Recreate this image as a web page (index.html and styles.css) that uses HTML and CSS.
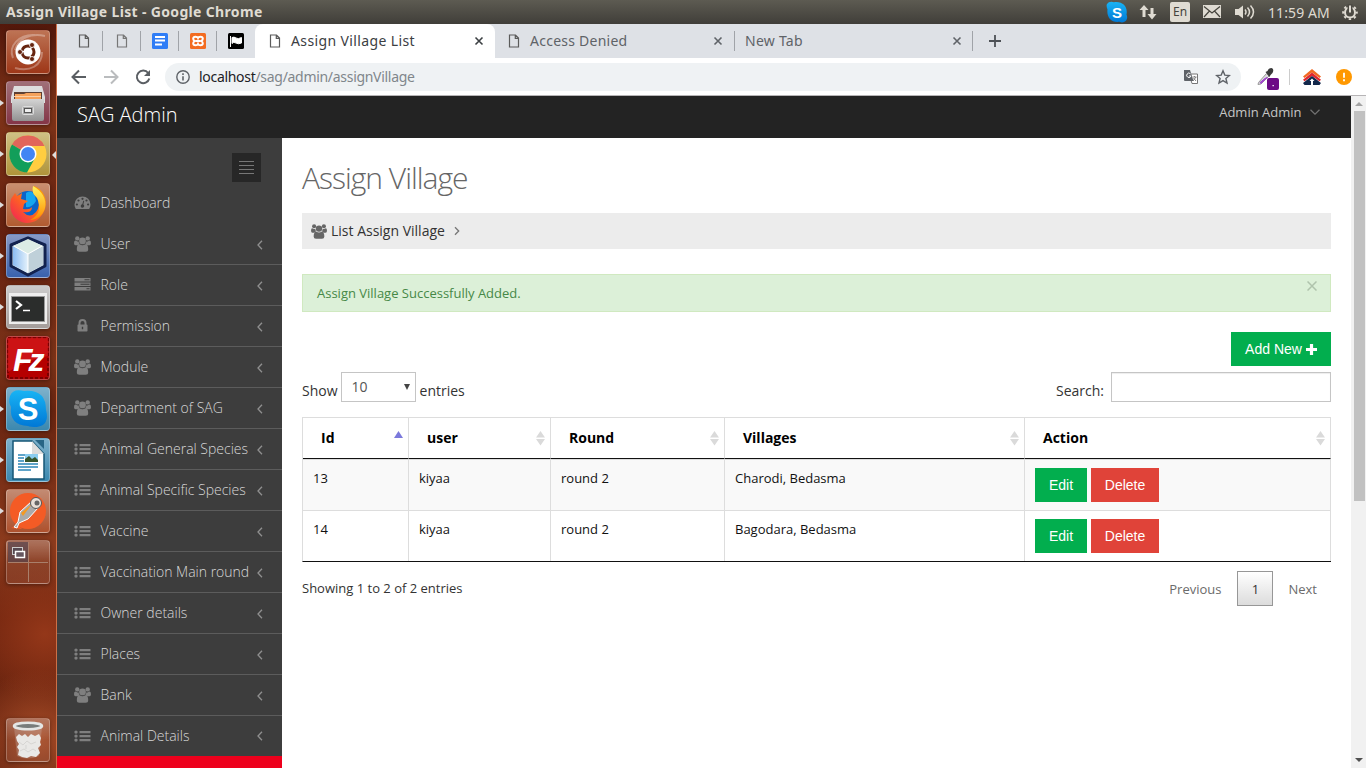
FILE: index.html
```html
<!DOCTYPE html>
<html lang="en">
<head>
<meta charset="utf-8">
<title>Assign Village List</title>
<link rel="stylesheet" href="styles.css">
</head>
<body>
<svg class="defs" aria-hidden="true">
  <defs>
    <symbol id="users" viewBox="0 0 17 16"><circle cx="3.300" cy="2.400" r="2.200"/><circle cx="13.700" cy="2.400" r="2.200"/><circle cx="8.500" cy="4.900" r="3.400"/><path d="M0 7.200Q0 4.600 1.300 4.600q2 1.200 3.300.600.100 1.900 1.100 2.700Q4.300 8 3.500 9.200H1.500Q0 9.200 0 7.200zM17 7.200q0-2.600-1.300-2.600-2 1.200-3.300.600-.1 1.900-1.100 2.700 1.400.100 2.200 1.300h2Q17 9.200 17 7.200zM2.800 13.300Q2.800 8.300 5.700 8.300 8.500 10 11.300 8.300q2.900 0 2.900 5 0 2.500-2.500 2.500H5.300q-2.500 0-2.500-2.500z"/></symbol>
    <symbol id="dash" viewBox="0 0 17 16"><path fill-rule="evenodd" d="M8.500 1.500A8 8 0 0 0 .5 9.500c0 1.600.4 3 1.200 4.200q.2.300.6.300h12.400q.4 0 .6-.3c.8-1.200 1.200-2.600 1.200-4.200A8 8 0 0 0 8.500 1.500zM8.500 2.700a1.100 1.100 0 1 1 0 2.200 1.100 1.100 0 1 1 0-2.200zM4.500 4.400a1.100 1.100 0 1 1 0 2.200 1.100 1.100 0 1 1 0-2.200zM2.900 8.400a1.100 1.100 0 1 1 0 2.200 1.100 1.100 0 1 1 0-2.200zM12.500 4.400a1.100 1.100 0 1 1 0 2.200 1.100 1.100 0 1 1 0-2.200zM14.100 8.400a1.100 1.100 0 1 1 0 2.200 1.100 1.100 0 1 1 0-2.200zM9.300 5.700l.9.200-.9 3.600a1.750 1.750 0 1 1-1-.2z"/></symbol>
    <symbol id="list" viewBox="0 0 17 16"><path d="M5.500 2H16.500v2.300H5.500zM5.500 6H16.500v2.300H5.500zM5.500 10H16.500v2.300H5.500zM5.500 13H5.500z"/><circle cx="2" cy="3.100" r="1.700"/><circle cx="2" cy="7.100" r="1.700"/><circle cx="2" cy="11.100" r="1.700"/></symbol>
    <symbol id="tasks" viewBox="0 0 17 16"><path fill-rule="evenodd" d="M.5 1h16v3.500H.5zM10.500 2.300v1h5v-1zM.5 5.500h16V9H.5zM6.500 6.800v1h9v-1zM.5 10h16v3.500H.5zM12.500 11.300v1h3v-1z"/></symbol>
    <symbol id="lock" viewBox="-2.500 -.5 17 16"><path fill-rule="evenodd" d="M2 6V4.400a4 4 0 0 1 8 0V6h.2q.8 0 .8.800v5.400q0 .8-.8.800H1.800q-.8 0-.8-.8V6.800q0-.8.8-.8zm2 0h4V4.400a2 2 0 0 0-4 0zM5.300 8.200h1.400v2.600H5.300z"/></symbol>
    <symbol id="page" viewBox="0 0 12 14"><path d="M1.500 1h6L10.500 4v9h-9zM7.300 1v3.300h3.200" fill="none" stroke="currentColor" stroke-width="1.200"/></symbol>
    <symbol id="x" viewBox="0 0 10 10"><path d="M1.500 1.500l7 7M8.500 1.500l-7 7" fill="none" stroke="currentColor" stroke-width="1.600"/></symbol>
    <symbol id="left" viewBox="0 0 6 10"><path d="M5 .8L1 5l4 4.200" fill="none" stroke="currentColor" stroke-width="1.300"/></symbol>
    <symbol id="sort" viewBox="0 0 9 16"><path d="M0 7.500L4.500 1 9 7.500zM0 9h9l-4.500 6.500z"/></symbol>
    <linearGradient id="gold" x2="0" y2="1"><stop stop-color="#fff45c"/><stop offset="1" stop-color="#ff8a00"/></linearGradient>
    <linearGradient id="flame" x1="1" x2="0" y2="1"><stop stop-color="#ffae00"/><stop offset=".5" stop-color="#ff6b1c"/><stop offset="1" stop-color="#f01b5c"/></linearGradient>
    <linearGradient id="metal" x2="0" y2="1"><stop stop-color="#d4d4d4"/><stop offset="1" stop-color="#929292"/></linearGradient>
    <linearGradient id="sky" x2="0" y2="1"><stop stop-color="#19b4f4"/><stop offset="1" stop-color="#0078d6"/></linearGradient>
    <linearGradient id="ice" x2="1"><stop stop-color="#8cbcf2"/><stop offset="1" stop-color="#e5f2fb"/></linearGradient>
  </defs>
</svg>

<header class="menubar">
  <span class="wintitle">Assign Village List - Google Chrome</span>
  <div class="tray">
    <svg class="t-skype" viewBox="0 0 22 22"><path d="M1 3Q3 0 8 1.200C17 0 22 6 20.500 13.500 23 19 18 23 13.500 20.800 5 22 .5 16 1.500 8.500Q0 5 1 3z" fill="url(#sky)"/><text x="11" y="16.500" text-anchor="middle" class="skype-s">S</text></svg>
    <svg class="t-net" viewBox="0 0 18 16"><path d="M3.500 13V6H.5L5 1l4.500 5h-3v7zM11.500 4h3v6h3L13 15.500 8.500 10h3z" fill="#dfdbd2"/></svg>
    <span class="lang">En</span>
    <svg class="t-mail" viewBox="0 0 18 14"><path d="M0 0h18v13H0z" fill="#dfdbd2"/><path d="M1 1.500l8 6.500 8-6.500M1 12l5.500-6M17 12l-5.500-6" fill="none" stroke="#45433c" stroke-width="1.200"/></svg>
    <svg class="t-vol" viewBox="0 0 20 16"><path d="M0 5h3.500L8 1.500v13L3.500 11H0z" fill="#dfdbd2"/><path d="M10 5.500q2 2.500 0 5M12.500 3.500q4 4.500 0 9M15.500 1.500q6 6.500 0 13" fill="none" stroke="#dfdbd2" stroke-width="1.500"/></svg>
    <span class="clock">11:59 AM</span>
    <svg class="t-gear" viewBox="0 0 16 16"><circle cx="8" cy="8.500" r="5" fill="none" stroke="#dfdbd2" stroke-width="2"/><circle cx="8" cy="8.500" r="6.800" fill="none" stroke="#dfdbd2" stroke-width="2" stroke-dasharray="2.400 2.940" stroke-dashoffset="1.200"/><path d="M8 0v9" stroke="#4d4b44" stroke-width="5"/><path d="M8 1.500v7" stroke="#dfdbd2" stroke-width="2"/></svg>
  </div>
</header>

<div class="desktop">
  <nav class="launcher">
    <div class="tile dash-tile"><svg viewBox="0 0 44 44"><path d="M9 20C12 8 25 3 39 6M7 28C2 16 13 4 29 5M36 22c0 14-12 20-27 16" fill="none" stroke="#fff" stroke-opacity=".3" stroke-width="2"/><circle cx="22" cy="22" r="12.500" fill="#fff"/><circle cx="22" cy="22" r="6" fill="none" stroke="#66240f" stroke-width="3" stroke-dasharray="11 1.560" stroke-dashoffset="5.500"/><g fill="#66240f" stroke="#fff" stroke-width=".8"><circle cx="14" cy="22" r="2.500"/><circle cx="26" cy="15" r="2.500"/><circle cx="26" cy="29" r="2.500"/></g></svg></div>
    <div class="tile files run"><svg viewBox="0 0 44 44"><path d="M8 5h28l3 11v6H5v-6z" fill="#dedede"/><path d="M8 11h28v8H8z" fill="#5d4033"/><path d="M9 13h9l2-1h15v7H9z" fill="#f5a25b"/><path d="M8 15.500h27" stroke="#fbd0a5"/><path d="M6 18h32v20q0 2-2 2H8q-2 0-2-2z" fill="url(#metal)"/><rect x="16.500" y="25.500" width="11" height="8" rx="1" fill="#aaa" stroke="#ddd"/><rect x="18.500" y="27.500" width="7" height="4" fill="#eee" stroke="#555"/></svg></div>
    <div class="tile chrome-tile run active"><svg viewBox="0 0 44 44"><circle cx="22" cy="22" r="18.500" fill="#ffcd40"/><path d="M22 22L6 12.500A18.500 18.500 0 0 1 38.500 14H22z" fill="#e1655a"/><path d="M6 12.500A18.500 18.500 0 0 0 21 40.500l8-14.500-7-4z" fill="#129e5a"/><circle cx="22" cy="22" r="8.500" fill="#fff"/><circle cx="22" cy="22" r="7" fill="#4285f4"/></svg></div>
    <div class="tile fire run"><svg viewBox="0 0 44 44"><circle cx="22" cy="22" r="14" fill="#0a63c8"/><path d="M20 10q8-5 10 8-4 7-10 6z" fill="#14a6ef"/><path d="M5 16l4-6 2 3 5-3-1 6 7 2-4 3-1 5q7 1 9-2c0 5-5 6-9 5q7 7 13 0 5-6 1-16-5-4-3-10c9 3 14 13 11 23C35 37 27 40 21 40 9 39 2 29 5 16z" fill="url(#flame)"/><path d="M27 3c9 5 14 13 12 22-2 8-9 12-15 12 10-5 11-13 7-22q-6-5-4-12z" fill="url(#gold)"/></svg></div>
    <div class="tile beans run"><svg viewBox="0 0 44 44"><path d="M22 4l17 7v21L22 41 5 32V11z" fill="#dcebf1" stroke="#12224f" stroke-width="3" stroke-linejoin="round"/><path d="M7 12l15 8v19L7 31z" fill="url(#ice)"/><path d="M37 12l-15 8v19l15-8z" fill="#bfd0d9"/><path d="M22 5l15 7-15 8-15-8z" fill="#dcece6"/><path d="M8 12l14 8 14-8M22 20v18" fill="none" stroke="#fff"/></svg></div>
    <div class="tile term run"><svg viewBox="0 0 44 44"><path d="M3 8h38v31H3z" fill="#eee"/><path d="M5 11h34v26H5z" fill="#999"/><path d="M6 12h32v24H6z" fill="#2b2d2c"/><path d="M10 16l5 4-5 4" fill="none" stroke="#fff" stroke-width="2.200"/><path d="M17 25.500h7" stroke="#fff" stroke-width="1.500"/></svg></div>
    <div class="tile zilla"><svg viewBox="0 0 44 44"><rect x="2" y="2" width="40" height="40" fill="#b50000" stroke="#7c0000" stroke-width="2" stroke-dasharray="3 2"/><path d="M2 2h40v18Q20 24 2 36z" fill="#d51a1c" opacity=".7"/><text x="7" y="35" class="fz">Fz</text></svg></div>
    <div class="tile skype run"><svg viewBox="0 0 44 44"><path d="M4 9q3-8 14-5Q40 2 40 23q4 15-9 17-7 0-9-1Q3 38 5 20 2 15 4 9z" fill="url(#sky)"/><text x="22" y="33" text-anchor="middle" class="skype-l">S</text></svg></div>
    <div class="tile writer run"><svg viewBox="0 0 44 44"><path d="M29 2h9v9z" fill="#286585"/><path d="M7 3h19l12 13v25H7z" fill="#fff" stroke="#155675" stroke-width="1.500"/><path d="M26 3v13h12z" fill="#ddd"/><path d="M12 17h14M12 20h6M12 23h6M12 26h20M12 29h20M12 32h13" stroke="#2b87b8" stroke-width="1.400"/><path d="M19 16h13v8H19z" fill="#8bcdf0"/><path d="M19 24v-3l4-3 3 3 3-2 3 3v2z" fill="#35552c"/></svg></div>
    <div class="tile post run"><svg viewBox="0 0 44 44"><circle cx="22" cy="22" r="18" fill="#f45b25"/><path d="M5 39l7-3 4 4z" fill="#f45b25"/><path d="M8 38l4-5 2-10L26 12l5 2 1 5-10 11-9 4-2 5z" fill="#aaa" stroke="#fff"/><path d="M15 24l11-9-9 12z" fill="#f59a22"/><circle cx="30" cy="14" r="5.500" fill="#e8dfd8" stroke="#555"/><circle cx="31" cy="14" r="2.500" fill="#666"/></svg></div>
    <div class="tile spaces"><svg viewBox="0 0 44 44"><path d="M2 2h20v20H2z" fill="#56434d" opacity=".7"/><path d="M22.500 2v40M2 22.500h40" stroke="#a97f6b"/><rect x="6.500" y="7.500" width="10" height="7" fill="#554850" stroke="#ccc"/><rect x="9.500" y="11.500" width="9" height="6" fill="#665760" stroke="#fff" stroke-width="1.500"/></svg></div>
    <div class="tile trash"><svg viewBox="0 0 44 44"><path d="M8 9l3 29q10 5 22 0l3-29z" fill="#ddd" opacity=".22"/><path d="M10 19l3-3 3 2 3-2 3 3 3-3 4 2 4-2 2 4-1 4 1 3-3 3 2 5-4 4-5-1-4 2-5-1-4-2 1-5-2-3 2-3-2-3z" fill="#e9e8e6"/><path d="M13 24l4 3 4-4 4 3 5-2M14 33l4-2 4 3 5-3 3 2M20 27v4" fill="none" stroke="#cfcdca" stroke-width=".7"/><ellipse cx="22" cy="8" rx="14" ry="3.200" fill="#777c7b" stroke="#e4e6e5" stroke-width="2.500"/></svg></div>
  </nav>

  <div class="browser">
    <div class="tabs">
      <div class="pin"><svg class="doc"><use href="#page"/></svg></div>
      <div class="pin"><svg class="doc dim"><use href="#page"/></svg></div>
      <div class="pin"><svg class="fav" viewBox="0 0 16 16"><rect width="16" height="16" rx="1.500" fill="#2f7df6"/><path d="M3 4h10M3 7.500h10M3 11.500h7" stroke="#fff" stroke-width="1.800"/></svg></div>
      <div class="pin"><svg class="fav" viewBox="0 0 16 16"><rect width="16" height="16" rx="1.500" fill="#f36c21"/><path d="M8 5Q7.500 3.700 5.500 3.700 3.200 3.700 3.200 5.700q0 1.300 1.500 2.300-1.500 1-1.500 2.300 0 2 2.300 2 2 0 2.500-1.300.5 1.300 2.500 1.300 2.300 0 2.300-2 0-1.300-1.500-2.300 1.500-1 1.500-2.300 0-2-2.300-2Q8.500 3.700 8 5zM5.500 8h5" fill="none" stroke="#fff" stroke-width="2"/></svg></div>
      <div class="pin last"><svg class="fav" viewBox="0 0 16 16"><rect width="16" height="16" rx="1.500"/><path d="M2.500 3v11" stroke="#fff"/><path d="M4 4.500q2-1 4 .5t5.500-.5v5.500q-3 1.500-5.500 0t-4 .5z" fill="#fff" stroke="#fff"/></svg></div>
      <div class="tab on"><svg class="doc"><use href="#page"/></svg><span class="tl t1">Assign Village List</span><svg class="close"><use href="#x"/></svg></div>
      <div class="tab"><svg class="doc"><use href="#page"/></svg><span class="tl t2">Access Denied</span><svg class="close"><use href="#x"/></svg></div>
      <div class="tab bare"><span class="tl t3">New Tab</span><svg class="close"><use href="#x"/></svg></div>
      <svg class="plus" viewBox="0 0 12 12"><path d="M6 0v12M0 6h12" stroke="#4d5156" stroke-width="1.800"/></svg>
    </div>
    <div class="toolbar">
      <svg class="nav" viewBox="0 0 16 16"><path d="M15 8H2M8 1.500L1.500 8 8 14.500" fill="none" stroke="#5a5e63" stroke-width="2"/></svg>
      <svg class="nav" viewBox="0 0 16 16"><path d="M1 8h13M8 1.500L14.500 8 8 14.500" fill="none" stroke="#babcbe" stroke-width="2"/></svg>
      <svg class="nav" viewBox="0 0 16 16"><path d="M13.200 4A6.300 6.300 0 1 0 14.300 9.500" fill="none" stroke="#5a5e63" stroke-width="2"/><path d="M15 1v6H9z" fill="#5a5e63"/></svg>
      <div class="omni">
        <svg class="info" viewBox="0 0 14 14"><circle cx="7" cy="7" r="6.200" fill="none" stroke="#5f6368" stroke-width="1.400"/><path d="M7 6.200v4.300M7 3.300v1.600" stroke="#5f6368" stroke-width="1.600"/></svg>
        <span class="url"><b>localhost</b>/sag/admin/assignVillage</span>
        <svg class="trans" viewBox="0 0 14 14"><path d="M5 4h8.500v9.500H8z" fill="#fff" stroke="#777"/><path d="M0 0h6l3.500 11H1q-1 0-1-1z" fill="#5f6368"/><path d="M6.500 3.800A2.200 2.200 0 1 0 7 6H5" fill="none" stroke="#fff"/><path d="M8.500 7h4M10.500 6v1M9 11l3-4M9.500 8l2.500 3" fill="none" stroke="#777" stroke-width=".9"/></svg>
        <svg class="star" viewBox="0 0 16 16"><path d="M8 1.800l1.800 4.300 4.600.4-3.500 3 1.100 4.500L8 11.600 4 14l1.100-4.500-3.500-3 4.600-.4z" fill="none" stroke="#5f6368" stroke-width="1.400"/></svg>
      </div>
      <svg class="picker" viewBox="0 0 22 22"><path d="M1.500 14.500l8-9 2.500 2.500-8 8-3 .5z" fill="#ddd" stroke="#999"/><path d="M3 14.500l5-4 2-1-6 6z" fill="#a13fd0" stroke="#a13fd0"/><path d="M8.500 4l4 5 1-2 2-2q2-4-1-5-3 0-4 3z" fill="#3b3b3b"/><rect x="10" y="10" width="12" height="12" rx="2" fill="#6c0a86"/><path d="M15.500 17h1.300v1.300h-1.300z" fill="#fff"/></svg>
      <i class="vsep"></i>
      <svg class="house" viewBox="0 0 18 16"><path d="M0 7.500L9 0l9 7.500-1.500 1.500L9 3.500 1.500 9z" fill="#f26a22"/><path d="M0 10.800L9 3.500l9 7.300-1.500 1.500L9 7 1.500 12.300z" fill="#e0262f"/><path d="M0 14l9-7 9 7L16.500 16H10v-3H8v3H1.500z" fill="#13284b"/><path d="M9 9.500l2.500 2.500H10v4H8v-4H6.500z" fill="#fff"/></svg>
      <svg class="warn" viewBox="0 0 16 16"><circle cx="8" cy="8" r="8" fill="#ff9800"/><path d="M8 3.800v5M8 10.300v1.900" stroke="#fff" stroke-width="1.800"/></svg>
    </div>

    <div class="viewport">
      <div class="site">
        <div class="sitebar"><span class="brand">SAG Admin</span><span class="who">Admin Admin</span><svg class="down" viewBox="0 0 10 6"><path d="M.5.8L5 5.200 9.500.8" fill="none" stroke="#737373" stroke-width="1.200"/></svg></div>
        <div class="cols">
          <aside class="side">
            <div class="toggle"><i></i><i></i><i></i><i></i></div>
            <a class="item flat"><svg class="ic"><use href="#dash"/></svg><span>Dashboard</span></a>
            <a class="item"><svg class="ic"><use href="#users"/></svg><span>User</span><svg class="ar"><use href="#left"/></svg></a>
            <a class="item"><svg class="ic"><use href="#tasks"/></svg><span>Role</span><svg class="ar"><use href="#left"/></svg></a>
            <a class="item"><svg class="ic"><use href="#lock"/></svg><span>Permission</span><svg class="ar"><use href="#left"/></svg></a>
            <a class="item"><svg class="ic"><use href="#users"/></svg><span>Module</span><svg class="ar"><use href="#left"/></svg></a>
            <a class="item"><svg class="ic"><use href="#users"/></svg><span>Department of SAG</span><svg class="ar"><use href="#left"/></svg></a>
            <a class="item"><svg class="ic li"><use href="#list"/></svg><span>Animal General Species</span><svg class="ar"><use href="#left"/></svg></a>
            <a class="item"><svg class="ic li"><use href="#list"/></svg><span>Animal Specific Species</span><svg class="ar"><use href="#left"/></svg></a>
            <a class="item"><svg class="ic li"><use href="#list"/></svg><span>Vaccine</span><svg class="ar"><use href="#left"/></svg></a>
            <a class="item"><svg class="ic li"><use href="#list"/></svg><span>Vaccination Main round</span><svg class="ar"><use href="#left"/></svg></a>
            <a class="item"><svg class="ic li"><use href="#list"/></svg><span>Owner details</span><svg class="ar"><use href="#left"/></svg></a>
            <a class="item"><svg class="ic li"><use href="#list"/></svg><span>Places</span><svg class="ar"><use href="#left"/></svg></a>
            <a class="item"><svg class="ic"><use href="#users"/></svg><span>Bank</span><svg class="ar"><use href="#left"/></svg></a>
            <a class="item end"><svg class="ic li"><use href="#list"/></svg><span>Animal Details</span><svg class="ar"><use href="#left"/></svg></a>
            <div class="red"></div>
          </aside>
          <main class="main">
            <h1>Assign Village</h1>
            <div class="crumb"><svg class="cic"><use href="#users"/></svg><span>List Assign Village</span><svg class="car" viewBox="0 0 6 10"><path d="M1 1.200L4.700 5 1 8.800" fill="none" stroke="#777" stroke-width="1.300"/></svg></div>
            <div class="alert"><span>Assign Village Successfully Added.</span><svg class="dismiss" viewBox="0 0 10 10"><path d="M.5.5l9 9M9.500.5l-9 9" stroke="#afc3ac" stroke-width="1.500"/></svg></div>
            <div class="actions"><button class="btn green add">Add New <svg viewBox="0 0 11 11"><path d="M5.500 0v11M0 5.500h11" stroke="#fff" stroke-width="3.200"/></svg></button></div>
            <div class="controls">
              <span class="lab">Show</span><div class="select"><span>10</span><svg viewBox="0 0 6 6"><path d="M0 0h6L3 6z" fill="#444"/></svg></div><span class="lab ent">entries</span>
              <span class="lab srch">Search:</span><input class="search" aria-label="Search">
            </div>
            <table class="grid">
              <colgroup><col class="c1"><col class="c2"><col class="c3"><col class="c4"><col class="c5"></colgroup>
              <thead><tr>
                <th><div><span>Id</span><svg viewBox="0 0 9 16"><path d="M0 8L4.500 1 9 8z" fill="#7b79dc"/></svg></div></th>
                <th><div><span>user</span><svg><use href="#sort"/></svg></div></th>
                <th><div><span>Round</span><svg><use href="#sort"/></svg></div></th>
                <th><div><span>Villages</span><svg><use href="#sort"/></svg></div></th>
                <th><div><span>Action</span><svg><use href="#sort"/></svg></div></th>
              </tr></thead>
              <tbody>
                <tr class="odd"><td>13</td><td>kiyaa</td><td>round 2</td><td>Charodi, Bedasma</td><td class="act"><div><button class="btn green">Edit</button><button class="btn redb">Delete</button></div></td></tr>
                <tr><td>14</td><td>kiyaa</td><td>round 2</td><td>Bagodara, Bedasma</td><td class="act"><div><button class="btn green">Edit</button><button class="btn redb">Delete</button></div></td></tr>
              </tbody>
            </table>
            <div class="foot"><span class="showing">Showing 1 to 2 of 2 entries</span><span class="pg">Previous</span><span class="pg cur">1</span><span class="pg next">Next</span></div>
          </main>
        </div>
      </div>
      <div class="scroll"><svg viewBox="0 0 8 4"><path d="M4 0l4 4H0z" fill="#a3a3a3"/></svg><div class="thumb"></div><svg viewBox="0 0 8 4"><path d="M4 4L0 0h8z" fill="#505050"/></svg></div>
    </div>
  </div>
</div>
</body>
</html>
```
FILE: styles.css
```css
* { box-sizing: border-box; }
body { margin: 0; width: 1366px; height: 768px; overflow: hidden; font-family: "Open Sans", "Noto Sans", sans-serif; background: #fff; }
.defs { position: absolute; width: 0; height: 0; }
svg { flex: none; display: block; }

.menubar { height: 24px; display: flex; align-items: center; justify-content: space-between; padding: 0 8px 0 6px; background: linear-gradient(#5d5b52, #403e39); color: #dfdbd2; font-family: "Noto Sans", sans-serif; }
.wintitle { font-size: 14px; font-weight: 700; white-space: nowrap; line-height: 24px; letter-spacing: .34px; }
.tray { display: flex; align-items: center; }
.t-skype { width: 22px; height: 22px; margin-right: 11px; }
.skype-s { font: 700 15px "Liberation Sans", sans-serif; fill: #fff; }
.t-net { width: 18px; height: 16px; margin-right: 13px; }
.lang { width: 20px; height: 20px; background: #dfdbd2; color: #45433c; border-radius: 2px; font-size: 12px; line-height: 20px; text-align: center; margin-right: 13px; }
.t-mail { width: 18px; height: 14px; margin-right: 14px; }
.t-vol { width: 20px; height: 16px; margin-right: 13px; }
.clock { font-size: 14px; width: 61px; white-space: nowrap; margin-right: 13px; letter-spacing: .1px; }
.t-gear { width: 16px; height: 16px; }

.desktop { display: flex; height: 744px; }
.launcher { width: 57px; padding: 6px 0 6px 6px; display: flex; flex-direction: column; gap: 7px; border-right: 1px solid #cc7047; background: radial-gradient(circle at 80% 82%, #943719 0, transparent 70px), radial-gradient(circle at 70% 96%, #a84c27 0, transparent 70px), linear-gradient(#53180b, #7e3318 12%, #64200f 28%, #7b3218 45%, #682410 52%, #8c3b1d 70%, #71250f 80%, #642410); }
.tile { width: 44px; height: 44px; flex: none; border-radius: 4px; position: relative; border: 1px solid #ffffff40; box-shadow: 0 1px 4px #0006; background: linear-gradient(#ffffff48, #ffffff10 50%); }
.tile svg { width: 44px; height: 44px; margin: -1px; }
.run::before { content: ""; position: absolute; left: -7px; top: 18px; border: solid transparent; border-width: 3px 0 3px 4px; border-left-color: #ddd; }
.active::after { content: ""; position: absolute; right: -7px; top: 18px; border: solid transparent; border-width: 4px 4px 4px 0; border-right-color: #ddd; }
.dash-tile { background: linear-gradient(#bd7354, #9e3718); }
.files { background: linear-gradient(#a07078, #843547); }
.chrome-tile { background: linear-gradient(#cfc084, #b0943a); }
.fire { background: linear-gradient(#c98f70, #b15b30); }
.beans { background: linear-gradient(#8799c5, #3962ad); }
.term { background: linear-gradient(#ccc, #a49d9b); }
.zilla { background: #aa0c0c; }
.skype, .writer { background: linear-gradient(#7eb1cb, #3b88af); }
.post { background: linear-gradient(#c38b73, #ae512d); }
.trash { margin-top: auto; }
.fz { font: italic 700 32px "Liberation Sans", sans-serif; fill: #fff; letter-spacing: -4px; }
.skype-l { font: 700 31px "Liberation Sans", sans-serif; fill: #fff; }

.browser { width: 1309px; display: flex; flex-direction: column; }
.tabs { height: 34px; background: #dee1e6; display: flex; align-items: center; padding-left: 8px; font-family: "Noto Sans", sans-serif; color: #5f6368; }
.pin { width: 38px; height: 20px; display: flex; align-items: center; justify-content: center; border-right: 1px solid #a0a3a8; }
.last { border: 0; }
.doc { width: 12px; height: 14px; color: #5b5b5b; }
.dim { color: #777; }
.fav { width: 16px; height: 16px; }
.tab { width: 239px; height: 34px; display: flex; align-items: center; padding: 0 11px 0 13px; }
.tab .doc { margin-right: 10px; }
.tab.on { width: 240px; padding-left: 14px; background: #fff; border-radius: 8px 8px 0 0; color: #3c4043; }
.tab.bare { padding: 0 10px; border: solid #a0a3a8; border-width: 0 1px; height: 20px; }
.tl { font-size: 14px; flex: 1; white-space: nowrap; line-height: 20px; }
.t1 { letter-spacing: .38px; }
.t2 { letter-spacing: .25px; }
.t3 { letter-spacing: .25px; }
.close { width: 10px; height: 10px; }
.plus { width: 12px; height: 12px; margin-left: 16px; }
.toolbar { height: 38px; display: flex; align-items: center; padding-left: 14px; border-bottom: 1px solid #b6b4b6; }
.nav { width: 16px; height: 16px; margin-right: 16px; }
.omni { width: 1076px; height: 28px; border-radius: 14px; background: #eff2f4; display: flex; align-items: center; padding-left: 11px; margin-left: -2px; }
.info { width: 14px; height: 14px; margin-right: 9px; }
.url { font: 14px "Noto Sans", sans-serif; color: #80868b; flex: 1; letter-spacing: -.3px; }
.url b { font-weight: 400; color: #202124; }
.trans { width: 14px; height: 14px; margin-right: 17px; }
.star { width: 16px; height: 16px; margin-right: 10px; }
.picker { width: 22px; height: 22px; margin: 4px 10px 0 16px; }
.vsep { width: 1px; height: 16px; background: #ccc; margin-right: 13px; }
.house { width: 18px; height: 16px; margin-right: 15px; }
.warn { width: 16px; height: 16px; }

.viewport { display: flex; height: 672px; }
.site { width: 1294px; }
.sitebar { height: 42px; background: #232323; display: flex; padding: 0 30px 0 20px; color: #eee; }
.brand { font-size: 20px; font-weight: 300; line-height: 38px; flex: 1; color: #fff; }
.who { font-size: 13px; line-height: 32px; color: #c6c6c6; }
.down { width: 10px; height: 6px; margin: 13px 1px 0 8.5px; }
.cols { display: flex; height: 630px; }
.side { width: 225px; background: #3d3d3d; padding-top: 15px; display: flex; flex-direction: column; }
.toggle { width: 29px; height: 29px; background: #272727; margin-left: 175px; padding: 8px 7px; display: flex; flex-direction: column; gap: 3px; flex: none; }
.toggle i { height: 1px; background: #777; }
.item { height: 41px; flex: none; display: flex; align-items: center; padding: 0 19.5px 0 16.5px; border-bottom: 1px solid #5c5c5c; color: #d8d8d8; font-size: 14px; font-weight: 300; white-space: nowrap; }
.flat, .end { border-bottom-color: transparent; }
.end { height: 40px; }
.flat { height: 42px; }
.item span { flex: 1; width: 0; line-height: 20px; }
.ic { width: 17px; height: 16px; fill: #7f7f7f; margin-right: 10px; }
.li { margin-top: 2px; }
.ar { width: 6px; height: 10px; color: #909090; margin-top: 1px; }
.red { flex: 1; background: #ed001c; }

.main { width: 1069px; padding: 20px; color: #333; }
h1 { margin: 0; height: 55px; font-size: 30px; line-height: 40px; font-weight: 300; letter-spacing: -1px; color: #666; }
.crumb { height: 36px; background: #ececec; display: flex; align-items: center; padding-left: 9px; font-size: 14px; }
.crumb span { padding-bottom: 2px; }
.cic { width: 16px; height: 15px; fill: #666; margin-right: 4px; }
.car { width: 6px; height: 10px; margin-left: 9px; }
.alert { height: 38px; margin-top: 25px; background: #dcf0d8; border: 1px solid #d0e9c0; display: flex; justify-content: space-between; padding: 0 13px 0 14px; color: #468847; font-size: 13px; line-height: 36px; }
.dismiss { width: 10px; height: 10px; margin-top: 6px; }
.actions { display: flex; justify-content: flex-end; margin-top: 20px; }
.btn { height: 34px; border: 0; margin: 0; padding: 0 14px; color: #fff; font: 14px "Liberation Sans", Arial, sans-serif; display: flex; align-items: center; justify-content: center; }
.green { background: #02ae4e; }
.redb { background: #e04339; width: 68px; }
.add { width: 100px; gap: 4px; padding: 0; white-space: nowrap; }
.add svg { width: 11px; height: 11px; }
.controls { display: flex; height: 30px; margin-top: 6px; font-size: 14px; }
.lab { line-height: 38px; }
.select { width: 75px; height: 30px; border: 1px solid #c5c5c5; margin: 0 4px 0 3px; padding: 0 5px 0 10px; display: flex; align-items: center; justify-content: space-between; color: #555; }
.select span { padding-bottom: 2px; }
.select svg { width: 6px; height: 6px; }
.srch { margin-left: auto; margin-right: 7px; }
.search { width: 220px; height: 30px; border: 1px solid #c5c5c5; padding: 0; box-shadow: inset 0 1px 1px #00000013; }
.grid { width: 1029px; margin-top: 15px; table-layout: fixed; border-collapse: separate; border-spacing: 0; border: 1px solid #ddd; border-right: 0; border-bottom-color: #111; color: #111; font-size: 13px; }
.c1 { width: 106px; } .c2 { width: 142px; } .c3 { width: 174px; } .c4 { width: 300px; } .c5 { width: 306px; }
th { height: 41px; padding: 0 5px 0 18px; border-right: 1px solid #ddd; border-bottom: 1px solid #111; font-size: 14px; text-align: left; color: #000; }
th div { display: flex; align-items: center; justify-content: space-between; height: 40px; }
th span { padding-bottom: 2px; }
th svg { width: 9px; height: 16px; fill: #dadada; }
td { height: 51px; padding: 8px 10px 0; border-top: 1px solid #ddd; border-right: 1px solid #ddd; vertical-align: top; line-height: 20px; }
.odd td { background: #f9f9f9; }
.act div { display: flex; gap: 4px; }
.act .green { width: 52px; }
.foot { display: flex; align-items: center; height: 35px; margin-top: 9px; font-size: 13px; }
.showing { flex: 1; padding-bottom: 2px; }
.pg { color: #6b6b6b; }
.cur { width: 36px; height: 35px; line-height: 35px; margin: 0 15px 0 16px; border: 1px solid #979797; background: linear-gradient(#fff, #dcdcdc); text-align: center; color: #333; }
.next { margin-right: 14px; }
.scroll { width: 15px; background: #f1f1f1; display: flex; flex-direction: column; align-items: center; padding: 6px 0; }
.scroll svg { width: 8px; height: 4px; }
.thumb { width: 11px; height: 390px; margin: 5px 0 auto 1px; background: #c1c1c1; }
```
